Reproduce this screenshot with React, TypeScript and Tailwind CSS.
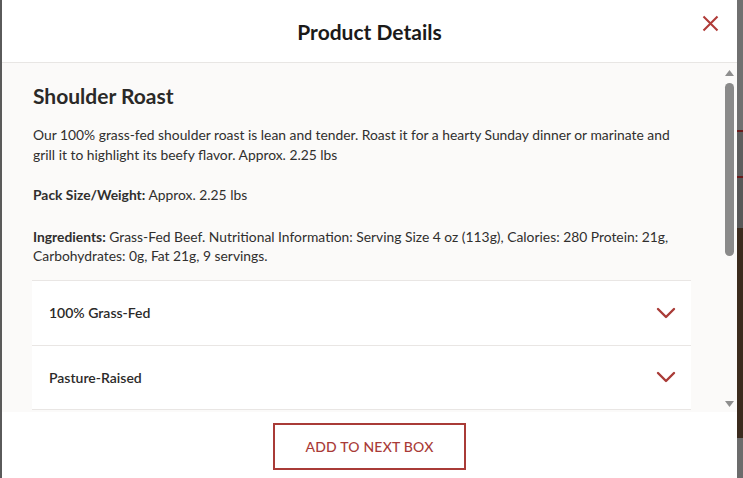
import React from 'react';

const RED = 'text-[#a93b37]';

function Chevron() {
  return (
    <svg width="20" height="12" viewBox="0 0 20 12" fill="none" className="shrink-0">
      <path d="M2 2l8 8 8-8" stroke="#a93b37" strokeWidth="2.4" strokeLinecap="round" strokeLinejoin="round" />
    </svg>
  );
}

function AccordionRow({ label, last }: { label: string; last?: boolean }) {
  return (
    <div className={`flex items-center justify-between h-[65px] pl-[17px] pr-[15px] border-t border-[#e9e6e4] ${last ? 'border-b' : ''}`}>
      <span className="text-[14px] font-semibold text-[#2b2a29]">{label}</span>
      <Chevron />
    </div>
  );
}

function Scrollbar() {
  return (
    <div className="w-[14px] pr-[2px] flex flex-col items-center pt-[7px] pb-[5px]">
      <svg width="9" height="6" viewBox="0 0 9 6"><path d="M0 6L4.5 0 9 6z" fill="#8e8e8e" /></svg>
      <div className="w-[9px] h-[173px] mt-[7px] rounded-full bg-[#8a8a8a]" />
      <div className="flex-1" />
      <svg width="9" height="6" viewBox="0 0 9 6"><path d="M0 0h9L4.5 6z" fill="#8e8e8e" /></svg>
    </div>
  );
}

export default function App() {
  return (
    <div className="flex w-[743px] h-[478px] overflow-hidden bg-[#6e6e6e]" style={{ fontFamily: 'Lato, "Open Sans", sans-serif' }}>
      <div className="w-[2px] bg-[#5a5a5a]" />

      <div className="w-[735px] flex flex-col bg-white">
        <div className="relative h-[63px] flex items-center justify-center border-b border-[#e8e6e4]">
          <h1 className="text-[21px] font-bold text-[#1b1a19] pt-[1px]">Product Details</h1>
          <button className="absolute right-[17px] top-[14px] p-[1px]">
            <svg width="17" height="17" viewBox="0 0 17 17">
              <path d="M1.5 1.5l14 14M15.5 1.5l-14 14" stroke="#b03c38" strokeWidth="2.1" />
            </svg>
          </button>
        </div>

        <div className="flex h-[349px] bg-[#fbfaf9]">
          <div className="flex-1 overflow-hidden pl-[31px] pr-[32px] pt-[19px] text-[#302f2e]">
            <h2 className="text-[21px] font-bold text-[#2a2928] leading-[28px]">Shoulder Roast</h2>
            <p className="mt-[15px] text-[13.85px] leading-[19.6px]">
              Our 100% grass-fed shoulder roast is lean and tender. Roast it for a hearty Sunday dinner or marinate and grill it to highlight its beefy flavor. Approx. 2.25 lbs
            </p>
            <p className="mt-[21px] text-[13.85px] leading-[19.6px]">
              <span className="font-bold">Pack Size/Weight:</span> Approx. 2.25 lbs
            </p>
            <p className="mt-[22px] text-[13.85px] leading-[19.6px]">
              <span className="font-bold">Ingredients:</span> Grass-Fed Beef. Nutritional Information: Serving Size 4 oz (113g), Calories: 280 Protein: 21g, Carbohydrates: 0g, Fat 21g, 9 servings.
            </p>
            <div className="mt-[14px] -ml-[1px] bg-white">
              <AccordionRow label="100% Grass-Fed" />
              <AccordionRow label="Pasture-Raised" last />
            </div>
          </div>
          <Scrollbar />
        </div>

        <div className="flex-1 flex items-start justify-center pt-[11px] bg-white">
          <button className={`w-[193px] h-[47px] border-2 border-[#a93b37] ${RED} text-[14px] font-medium tracking-[0.2px]`}>
            ADD TO NEXT BOX
          </button>
        </div>
      </div>

      <div className="w-[6px] flex flex-col">
        <div className="h-[130px] bg-[#707070]" />
        <div className="h-[2px] bg-[#6a1c1c]" />
        <div className="h-[44px] bg-[#5e5e5e]" />
        <div className="h-[2px] bg-[#6a1c1c]" />
        <div className="h-[50px] bg-[#585858]" />
        <div className="h-[210px] bg-[#3b2b1e]" />
        <div className="flex-1 bg-[#6c6c6c]" />
      </div>
    </div>
  );
}
